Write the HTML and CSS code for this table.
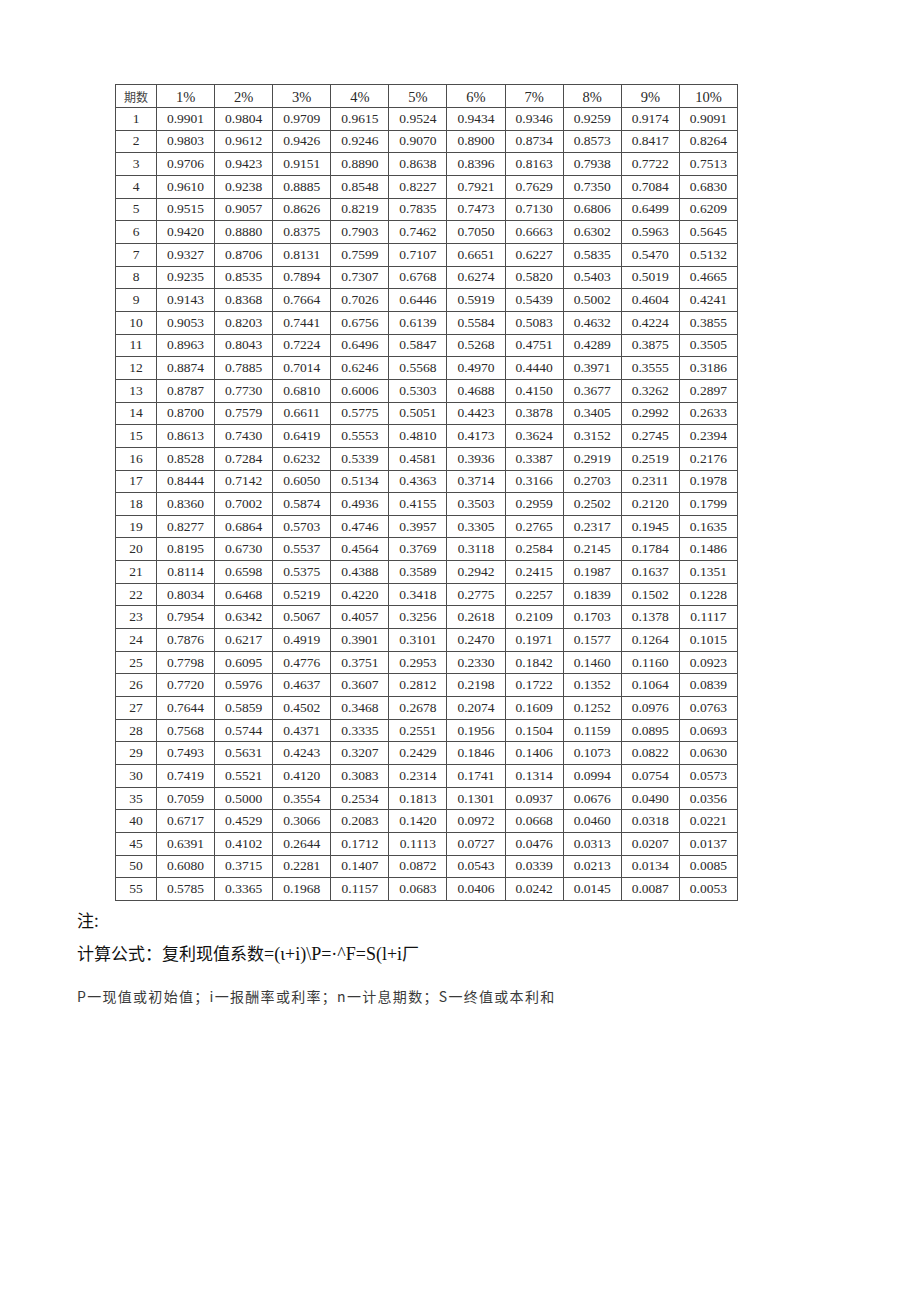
FILE: index.html
```html
<!DOCTYPE html>
<html lang="zh-CN">
<head>
<meta charset="utf-8">
<title>复利现值系数表</title>
<link rel="stylesheet" href="styles.css">
</head>
<body>
<div class="page">
<table class="factors">
<colgroup><col class="c-n"><col><col><col><col><col><col><col><col><col><col></colgroup>
<tr class="head"><td class="cjk">期数</td><td>1%</td><td>2%</td><td>3%</td><td>4%</td><td>5%</td><td>6%</td><td>7%</td><td>8%</td><td>9%</td><td>10%</td></tr>
<tr><td>1</td><td>0.9901</td><td>0.9804</td><td>0.9709</td><td>0.9615</td><td>0.9524</td><td>0.9434</td><td>0.9346</td><td>0.9259</td><td>0.9174</td><td>0.9091</td></tr>
<tr><td>2</td><td>0.9803</td><td>0.9612</td><td>0.9426</td><td>0.9246</td><td>0.9070</td><td>0.8900</td><td>0.8734</td><td>0.8573</td><td>0.8417</td><td>0.8264</td></tr>
<tr><td>3</td><td>0.9706</td><td>0.9423</td><td>0.9151</td><td>0.8890</td><td>0.8638</td><td>0.8396</td><td>0.8163</td><td>0.7938</td><td>0.7722</td><td>0.7513</td></tr>
<tr><td>4</td><td>0.9610</td><td>0.9238</td><td>0.8885</td><td>0.8548</td><td>0.8227</td><td>0.7921</td><td>0.7629</td><td>0.7350</td><td>0.7084</td><td>0.6830</td></tr>
<tr><td>5</td><td>0.9515</td><td>0.9057</td><td>0.8626</td><td>0.8219</td><td>0.7835</td><td>0.7473</td><td>0.7130</td><td>0.6806</td><td>0.6499</td><td>0.6209</td></tr>
<tr><td>6</td><td>0.9420</td><td>0.8880</td><td>0.8375</td><td>0.7903</td><td>0.7462</td><td>0.7050</td><td>0.6663</td><td>0.6302</td><td>0.5963</td><td>0.5645</td></tr>
<tr><td>7</td><td>0.9327</td><td>0.8706</td><td>0.8131</td><td>0.7599</td><td>0.7107</td><td>0.6651</td><td>0.6227</td><td>0.5835</td><td>0.5470</td><td>0.5132</td></tr>
<tr><td>8</td><td>0.9235</td><td>0.8535</td><td>0.7894</td><td>0.7307</td><td>0.6768</td><td>0.6274</td><td>0.5820</td><td>0.5403</td><td>0.5019</td><td>0.4665</td></tr>
<tr><td>9</td><td>0.9143</td><td>0.8368</td><td>0.7664</td><td>0.7026</td><td>0.6446</td><td>0.5919</td><td>0.5439</td><td>0.5002</td><td>0.4604</td><td>0.4241</td></tr>
<tr><td>10</td><td>0.9053</td><td>0.8203</td><td>0.7441</td><td>0.6756</td><td>0.6139</td><td>0.5584</td><td>0.5083</td><td>0.4632</td><td>0.4224</td><td>0.3855</td></tr>
<tr><td>11</td><td>0.8963</td><td>0.8043</td><td>0.7224</td><td>0.6496</td><td>0.5847</td><td>0.5268</td><td>0.4751</td><td>0.4289</td><td>0.3875</td><td>0.3505</td></tr>
<tr><td>12</td><td>0.8874</td><td>0.7885</td><td>0.7014</td><td>0.6246</td><td>0.5568</td><td>0.4970</td><td>0.4440</td><td>0.3971</td><td>0.3555</td><td>0.3186</td></tr>
<tr><td>13</td><td>0.8787</td><td>0.7730</td><td>0.6810</td><td>0.6006</td><td>0.5303</td><td>0.4688</td><td>0.4150</td><td>0.3677</td><td>0.3262</td><td>0.2897</td></tr>
<tr><td>14</td><td>0.8700</td><td>0.7579</td><td>0.6611</td><td>0.5775</td><td>0.5051</td><td>0.4423</td><td>0.3878</td><td>0.3405</td><td>0.2992</td><td>0.2633</td></tr>
<tr><td>15</td><td>0.8613</td><td>0.7430</td><td>0.6419</td><td>0.5553</td><td>0.4810</td><td>0.4173</td><td>0.3624</td><td>0.3152</td><td>0.2745</td><td>0.2394</td></tr>
<tr><td>16</td><td>0.8528</td><td>0.7284</td><td>0.6232</td><td>0.5339</td><td>0.4581</td><td>0.3936</td><td>0.3387</td><td>0.2919</td><td>0.2519</td><td>0.2176</td></tr>
<tr><td>17</td><td>0.8444</td><td>0.7142</td><td>0.6050</td><td>0.5134</td><td>0.4363</td><td>0.3714</td><td>0.3166</td><td>0.2703</td><td>0.2311</td><td>0.1978</td></tr>
<tr><td>18</td><td>0.8360</td><td>0.7002</td><td>0.5874</td><td>0.4936</td><td>0.4155</td><td>0.3503</td><td>0.2959</td><td>0.2502</td><td>0.2120</td><td>0.1799</td></tr>
<tr><td>19</td><td>0.8277</td><td>0.6864</td><td>0.5703</td><td>0.4746</td><td>0.3957</td><td>0.3305</td><td>0.2765</td><td>0.2317</td><td>0.1945</td><td>0.1635</td></tr>
<tr><td>20</td><td>0.8195</td><td>0.6730</td><td>0.5537</td><td>0.4564</td><td>0.3769</td><td>0.3118</td><td>0.2584</td><td>0.2145</td><td>0.1784</td><td>0.1486</td></tr>
<tr><td>21</td><td>0.8114</td><td>0.6598</td><td>0.5375</td><td>0.4388</td><td>0.3589</td><td>0.2942</td><td>0.2415</td><td>0.1987</td><td>0.1637</td><td>0.1351</td></tr>
<tr><td>22</td><td>0.8034</td><td>0.6468</td><td>0.5219</td><td>0.4220</td><td>0.3418</td><td>0.2775</td><td>0.2257</td><td>0.1839</td><td>0.1502</td><td>0.1228</td></tr>
<tr><td>23</td><td>0.7954</td><td>0.6342</td><td>0.5067</td><td>0.4057</td><td>0.3256</td><td>0.2618</td><td>0.2109</td><td>0.1703</td><td>0.1378</td><td>0.1117</td></tr>
<tr><td>24</td><td>0.7876</td><td>0.6217</td><td>0.4919</td><td>0.3901</td><td>0.3101</td><td>0.2470</td><td>0.1971</td><td>0.1577</td><td>0.1264</td><td>0.1015</td></tr>
<tr><td>25</td><td>0.7798</td><td>0.6095</td><td>0.4776</td><td>0.3751</td><td>0.2953</td><td>0.2330</td><td>0.1842</td><td>0.1460</td><td>0.1160</td><td>0.0923</td></tr>
<tr><td>26</td><td>0.7720</td><td>0.5976</td><td>0.4637</td><td>0.3607</td><td>0.2812</td><td>0.2198</td><td>0.1722</td><td>0.1352</td><td>0.1064</td><td>0.0839</td></tr>
<tr><td>27</td><td>0.7644</td><td>0.5859</td><td>0.4502</td><td>0.3468</td><td>0.2678</td><td>0.2074</td><td>0.1609</td><td>0.1252</td><td>0.0976</td><td>0.0763</td></tr>
<tr><td>28</td><td>0.7568</td><td>0.5744</td><td>0.4371</td><td>0.3335</td><td>0.2551</td><td>0.1956</td><td>0.1504</td><td>0.1159</td><td>0.0895</td><td>0.0693</td></tr>
<tr><td>29</td><td>0.7493</td><td>0.5631</td><td>0.4243</td><td>0.3207</td><td>0.2429</td><td>0.1846</td><td>0.1406</td><td>0.1073</td><td>0.0822</td><td>0.0630</td></tr>
<tr><td>30</td><td>0.7419</td><td>0.5521</td><td>0.4120</td><td>0.3083</td><td>0.2314</td><td>0.1741</td><td>0.1314</td><td>0.0994</td><td>0.0754</td><td>0.0573</td></tr>
<tr><td>35</td><td>0.7059</td><td>0.5000</td><td>0.3554</td><td>0.2534</td><td>0.1813</td><td>0.1301</td><td>0.0937</td><td>0.0676</td><td>0.0490</td><td>0.0356</td></tr>
<tr><td>40</td><td>0.6717</td><td>0.4529</td><td>0.3066</td><td>0.2083</td><td>0.1420</td><td>0.0972</td><td>0.0668</td><td>0.0460</td><td>0.0318</td><td>0.0221</td></tr>
<tr><td>45</td><td>0.6391</td><td>0.4102</td><td>0.2644</td><td>0.1712</td><td>0.1113</td><td>0.0727</td><td>0.0476</td><td>0.0313</td><td>0.0207</td><td>0.0137</td></tr>
<tr><td>50</td><td>0.6080</td><td>0.3715</td><td>0.2281</td><td>0.1407</td><td>0.0872</td><td>0.0543</td><td>0.0339</td><td>0.0213</td><td>0.0134</td><td>0.0085</td></tr>
<tr><td>55</td><td>0.5785</td><td>0.3365</td><td>0.1968</td><td>0.1157</td><td>0.0683</td><td>0.0406</td><td>0.0242</td><td>0.0145</td><td>0.0087</td><td>0.0053</td></tr>
</table>
<div class="notes">
<p class="note-title">注:</p>
<p class="formula">计算公式：复利现值系数<span class="latin">=(ι+i)\P=·^F=S(l+i</span>厂</p>
<p class="legend">P一现值或初始值；i一报酬率或利率；n一计息期数；S一终值或本利和</p>
</div>
</div>
</body>
</html>
```
FILE: styles.css
```css
html, body {
  margin: 0;
  padding: 0;
  background: #ffffff;
}

body {
  font-family: "Liberation Serif", "Noto Sans CJK SC", serif;
  color: #222;
}

.page {
  padding-top: 84px;
}

.factors {
  margin-left: 115px;
  width: 623px;
  border-collapse: collapse;
  table-layout: fixed;
  font-family: "Liberation Serif", "Noto Sans CJK SC", serif;
  font-size: 13.5px;
  color: #2a2a2a;
}

.factors col.c-n {
  width: 41px;
}

.factors td {
  border: 1px solid #4d4d4d;
  padding: 0;
  text-align: center;
  vertical-align: middle;
  line-height: 14px;
}

.factors tr {
  height: 22.66px;
}

.factors tr.head {
  height: 23px;
}

.factors tr.head td {
  font-size: 14.5px;
  padding-top: 1px;
}

.factors tr.head td.cjk {
  font-family: "Noto Sans CJK SC", sans-serif;
  font-size: 12px;
  color: #444;
}

.notes {
  padding-left: 77px;
  font-family: "Noto Sans CJK SC", sans-serif;
  color: #111;
}

.notes p {
  margin: 0;
}

.note-title {
  margin-top: 9px !important;
  font-size: 17px;
  line-height: 20px;
}

.formula {
  margin-top: 13px !important;
  font-size: 17px;
  line-height: 20px;
}

.formula .latin {
  font-family: "Liberation Serif", serif;
  font-size: 18px;
}

.legend {
  margin-top: 23px !important;
  font-size: 14px;
  line-height: 18px;
  color: #3a3a3a;
  letter-spacing: 1.3px;
}
```
